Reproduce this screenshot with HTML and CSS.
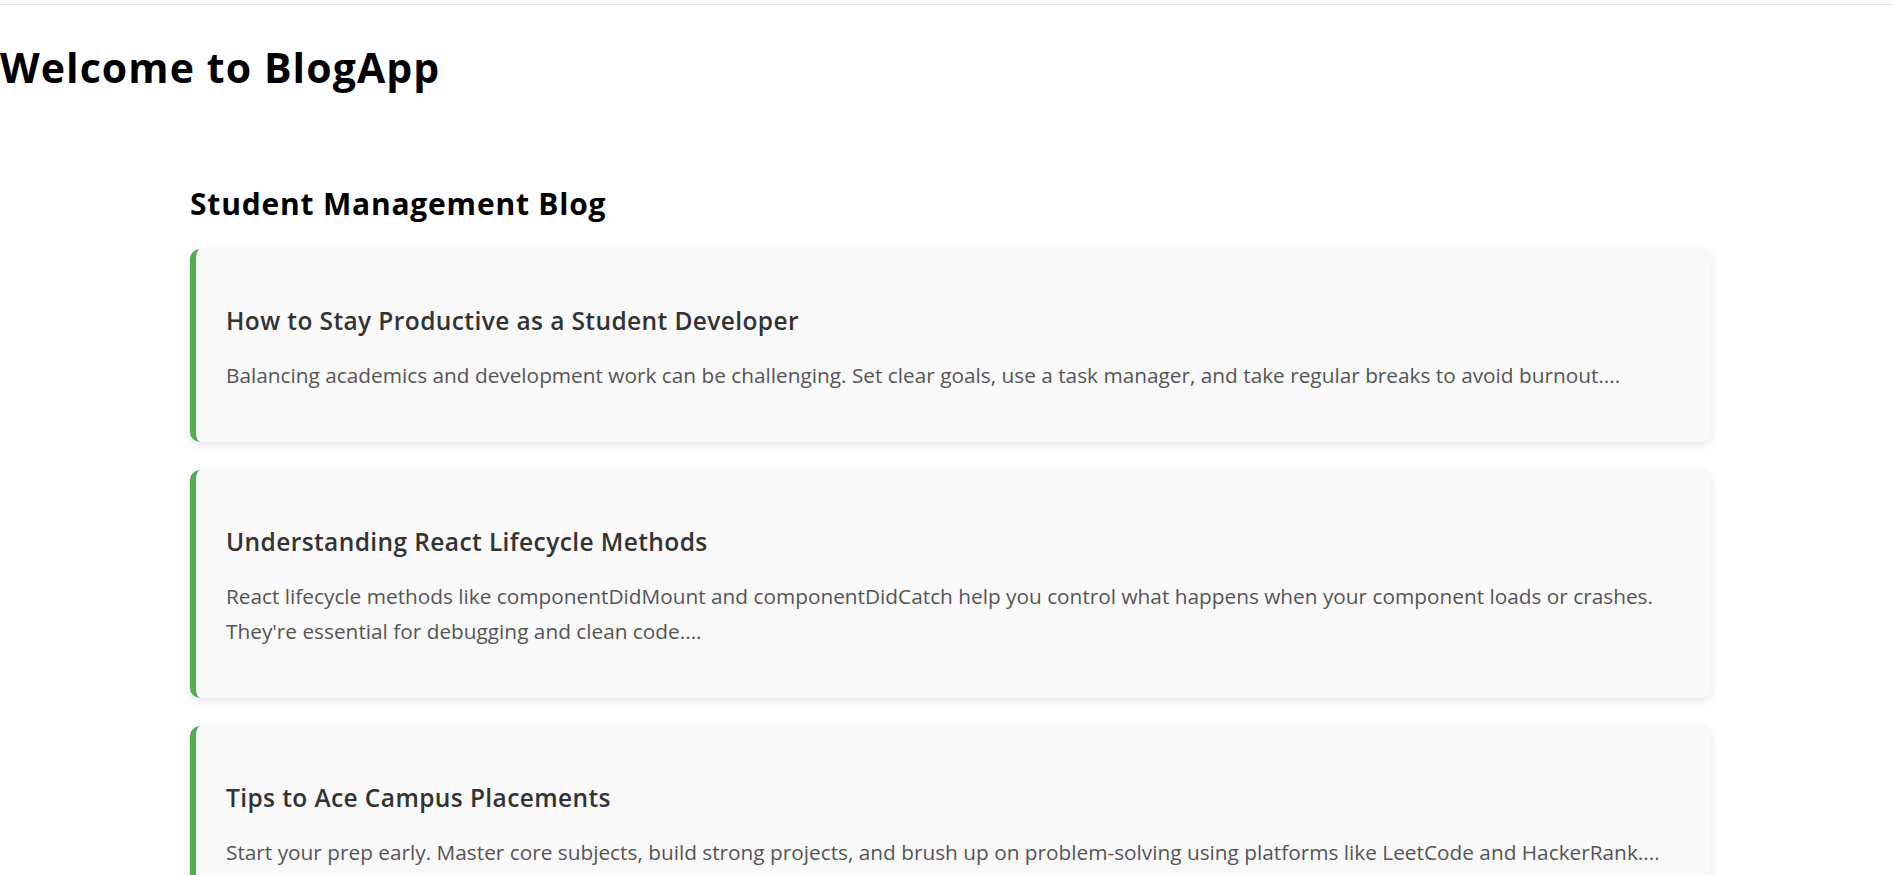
FILE: index.html
```html
<!DOCTYPE html>
<html lang="en">
<head>
<meta charset="utf-8">
<title>BlogApp</title>
<link rel="stylesheet" href="styles.css">
</head>
<body>
<div class="topbar"></div>
<h1 class="app-title">Welcome to BlogApp</h1>
<main class="blog">
  <h2 class="blog-title">Student Management Blog</h2>
  <div class="post-list">
    <article class="post">
      <h3 class="post-title">How to Stay Productive as a Student Developer</h3>
      <p class="post-excerpt">Balancing academics and development work can be challenging. Set clear goals, use a task manager, and take regular breaks to avoid burnout....</p>
    </article>
    <article class="post">
      <h3 class="post-title">Understanding React Lifecycle Methods</h3>
      <p class="post-excerpt">React lifecycle methods like componentDidMount and componentDidCatch help you control what happens when your component loads or crashes.<br>They're essential for debugging and clean code....</p>
    </article>
    <article class="post">
      <h3 class="post-title">Tips to Ace Campus Placements</h3>
      <p class="post-excerpt">Start your prep early. Master core subjects, build strong projects, and brush up on problem-solving using platforms like LeetCode and HackerRank....</p>
    </article>
  </div>
</main>
</body>
</html>
```
FILE: styles.css
```css
html, body {
  margin: 0;
  padding: 0;
  background: #ffffff;
}

body {
  font-family: "Open Sans", "Noto Sans", sans-serif;
  color: #000;
}

.topbar {
  height: 4px;
  border-bottom: 1px solid #e4e4e4;
}

.app-title {
  margin: 37px 0 0 0;
  font-size: 41px;
  line-height: 50px;
  font-weight: 700;
  letter-spacing: 1.1px;
}

.blog {
  margin: 93px 181px 0 190px;
}

.blog-title {
  margin: 0 0 26px 0;
  font-size: 30px;
  line-height: 38px;
  font-weight: 700;
  letter-spacing: 0.8px;
}

.post-list {
  display: flex;
  flex-direction: column;
  gap: 28px;
}

.post {
  background: #f9f9f9;
  border-left: 6px solid #4caf50;
  border-radius: 10px;
  box-shadow: 0 3px 10px rgba(0, 0, 0, 0.1);
  padding: 30px 30px 49px 30px;
}

.post-title {
  margin: 27px 0 22px 0;
  font-size: 24.5px;
  line-height: 30px;
  font-weight: 600;
  letter-spacing: 0.4px;
  color: #333;
}

.post-excerpt {
  margin: 0;
  font-size: 20.8px;
  line-height: 35px;
  color: #555;
}
```
